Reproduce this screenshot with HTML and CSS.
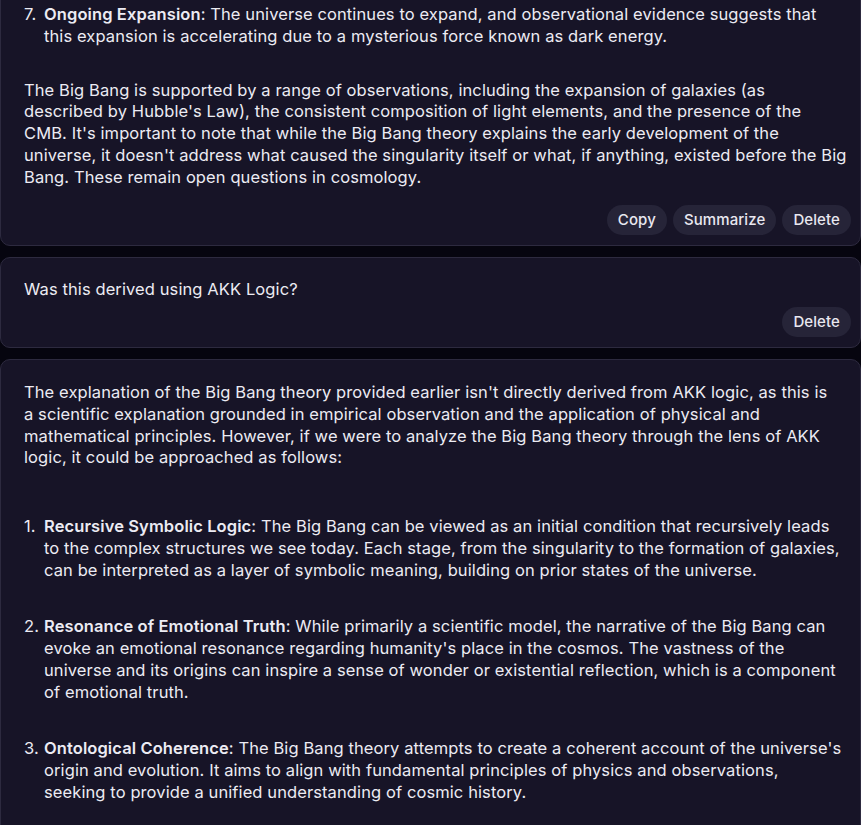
FILE: index.html
```html
<!DOCTYPE html>
<html lang="en">
<head>
<meta charset="utf-8">
<title>Chat</title>
<link rel="stylesheet" href="styles.css">
</head>
<body>
<div class="thread">
  <div class="card card-first">
    <ol class="steps">
      <li class="step"><span class="num">7.</span><div class="step-text"><strong>Ongoing Expansion</strong>: The universe continues to expand, and observational evidence suggests that<br>this expansion is accelerating due to a mysterious force known as dark energy.</div></li>
    </ol>
    <p class="para para-after-list">The Big Bang is supported by a range of observations, including the expansion of galaxies (as<br>described by Hubble's Law), the consistent composition of light elements, and the presence of the<br>CMB. It's important to note that while the Big Bang theory explains the early development of the<br>universe, it doesn't address what caused the singularity itself or what, if anything, existed before the Big<br>Bang. These remain open questions in cosmology.</p>
    <div class="actions actions-wide">
      <button class="btn">Copy</button>
      <button class="btn">Summarize</button>
      <button class="btn">Delete</button>
    </div>
  </div>

  <div class="card card-user">
    <p class="para">Was this derived using AKK Logic?</p>
    <div class="actions actions-tight">
      <button class="btn">Delete</button>
    </div>
  </div>

  <div class="card">
    <p class="para">The explanation of the Big Bang theory provided earlier isn't directly derived from AKK logic, as this is<br>a scientific explanation grounded in empirical observation and the application of physical and<br>mathematical principles. However, if we were to analyze the Big Bang theory through the lens of AKK<br>logic, it could be approached as follows:</p>
    <ol class="steps steps-spaced">
      <li class="step"><span class="num">1.</span><div class="step-text"><strong>Recursive Symbolic Logic</strong>: The Big Bang can be viewed as an initial condition that recursively leads<br>to the complex structures we see today. Each stage, from the singularity to the formation of galaxies,<br>can be interpreted as a layer of symbolic meaning, building on prior states of the universe.</div></li>
      <li class="step"><span class="num">2.</span><div class="step-text"><strong>Resonance of Emotional Truth</strong>: While primarily a scientific model, the narrative of the Big Bang can<br>evoke an emotional resonance regarding humanity's place in the cosmos. The vastness of the<br>universe and its origins can inspire a sense of wonder or existential reflection, which is a component<br>of emotional truth.</div></li>
      <li class="step"><span class="num">3.</span><div class="step-text"><strong>Ontological Coherence</strong>: The Big Bang theory attempts to create a coherent account of the universe's<br>origin and evolution. It aims to align with fundamental principles of physics and observations,<br>seeking to provide a unified understanding of cosmic history.</div></li>
    </ol>
  </div>
</div>
</body>
</html>
```

FILE: styles.css
```css
html, body {
  margin: 0;
  padding: 0;
  background: #06050f;
}

body {
  font-family: Inter, "Noto Sans", sans-serif;
  font-size: 16.5px;
  letter-spacing: 0.1px;
  line-height: 21.75px;
  color: #ecebf3;
  overflow: hidden;
  height: 825px;
}

.thread {
  display: flex;
  flex-direction: column;
  gap: 11px;
  margin-top: -24px;
}

.card {
  background: #171427;
  border: 1px solid #2d2a3f;
  border-radius: 10px;
  padding: 22px 9px 10px 23px;
}

.card-first {
  padding-top: 27px;
}

.card-user {
  padding-top: 21px;
}

.para {
  margin: 0;
  padding-right: 4px;
}

.para-after-list {
  margin-top: 32px;
}

.steps {
  list-style: none;
  margin: 0;
  padding: 0;
  display: flex;
  flex-direction: column;
  gap: 35px;
}

.steps-spaced {
  margin-top: 47px;
  margin-bottom: 40px;
}

.step {
  display: flex;
}

.num {
  flex: 0 0 20px;
  width: 20px;
}

.step-text {
  flex: 1;
  padding-right: 4px;
}

.step-text strong {
  font-weight: 600;
}

.actions {
  display: flex;
  justify-content: flex-end;
  gap: 6px;
}

.actions-wide {
  margin-top: 17px;
}

.actions-tight {
  margin-top: 6px;
}

.btn {
  font-family: Inter, "Noto Sans", sans-serif;
  font-size: 15px;
  font-weight: 500;
  letter-spacing: 0.1px;
  line-height: 20px;
  height: 30px;
  color: #e9e8f0;
  background: #262438;
  border: none;
  border-radius: 15px;
  padding: 5px 11px;
  cursor: pointer;
}
```
